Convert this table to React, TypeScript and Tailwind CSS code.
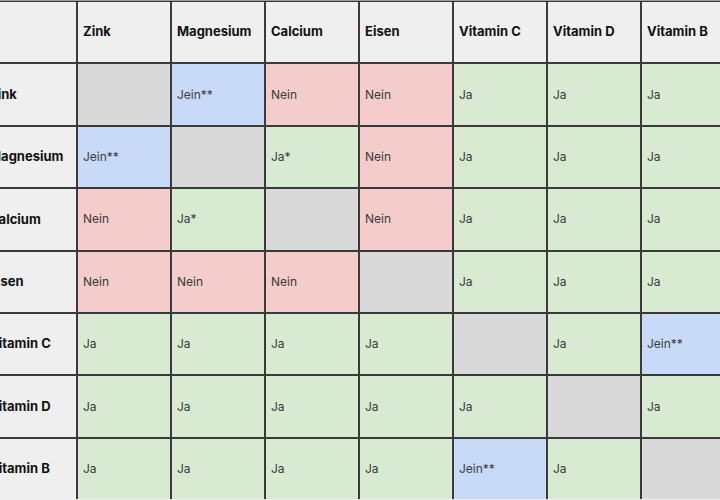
const NAMES = ['Zink', 'Magnesium', 'Calcium', 'Eisen', 'Vitamin C', 'Vitamin D', 'Vitamin B'];

const DATA: string[][] = [
  ['', 'Jein**', 'Nein', 'Nein', 'Ja', 'Ja', 'Ja'],
  ['Jein**', '', 'Ja*', 'Nein', 'Ja', 'Ja', 'Ja'],
  ['Nein', 'Ja*', '', 'Nein', 'Ja', 'Ja', 'Ja'],
  ['Nein', 'Nein', 'Nein', '', 'Ja', 'Ja', 'Ja'],
  ['Ja', 'Ja', 'Ja', 'Ja', '', 'Ja', 'Jein**'],
  ['Ja', 'Ja', 'Ja', 'Ja', 'Ja', '', 'Ja'],
  ['Ja', 'Ja', 'Ja', 'Ja', 'Jein**', 'Ja', ''],
];

function cellColor(v: string) {
  if (v === '') return 'bg-[#d9d9d9]';
  if (v.startsWith('Jein')) return 'bg-[#c9daf8]';
  if (v === 'Nein') return 'bg-[#f4cccc]';
  return 'bg-[#d9ead3]';
}

export default function App() {
  return (
    <div className="w-[720px] h-[500px] overflow-hidden bg-[#efefef] font-['Inter',sans-serif]">
      {/* table is cropped on the left, as in the source picture */}
      <div className="ml-[-16px] w-max grid grid-cols-[repeat(8,92px)] grid-rows-[repeat(8,60.4px)] gap-[2px] bg-[#3a3a3a] pt-[1px] border-t border-[#9a9a9a]">
        {/* header row */}
        <div className="bg-[#efefef]" />
        {NAMES.map((n) => (
          <div key={n} className="bg-[#efefef] flex items-center pl-[5px] text-[13px] font-bold text-[#111]">
            {n}
          </div>
        ))}

        {/* body rows */}
        {NAMES.map((row, i) => [
          <div key={row} className="bg-[#efefef] flex items-center pl-[5px] text-[13px] font-bold text-[#111]">
            {row}
          </div>,
          ...DATA[i].map((v, j) => (
            <div
              key={`${row}-${j}`}
              className={`${cellColor(v)} flex items-center pl-[5px] text-[12px] text-[#3a3a3a]`}
            >
              {v}
            </div>
          )),
        ])}
      </div>
    </div>
  );
}
